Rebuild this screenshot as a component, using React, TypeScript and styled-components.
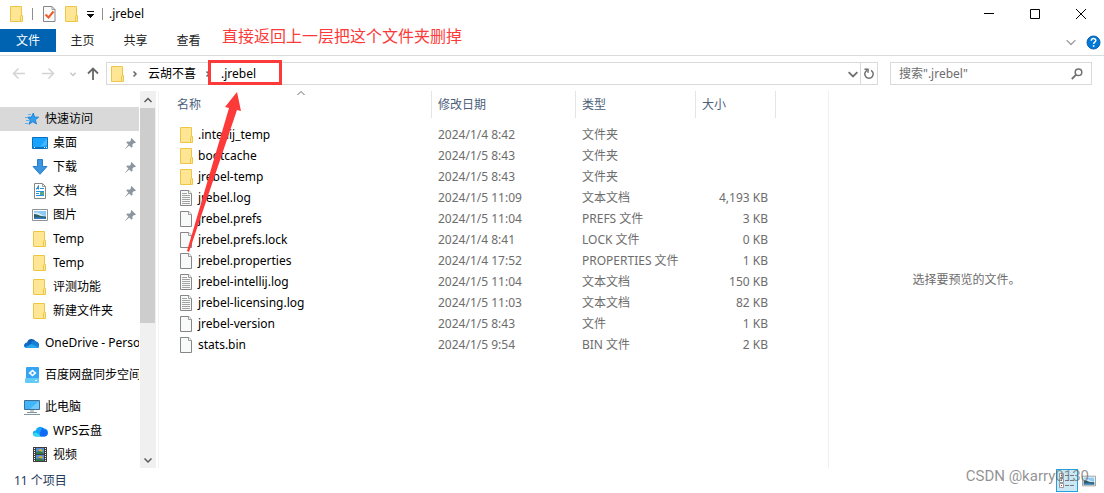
import React from "react";
import styled, { createGlobalStyle } from "styled-components";

const GlobalStyle = createGlobalStyle`
  * { box-sizing: border-box; }
  html, body { margin: 0; padding: 0; background: #fff; }
  body, button, input, table {
    font-family: "Noto Sans", "Noto Sans CJK SC", sans-serif;
    font-size: 12px;
    line-height: 16px;
    color: #000;
  }
  button { border: 0; padding: 0; margin: 0; background: none; }
  svg { display: block; flex: none; }
`;

/* ---------- window frame ---------- */

const Window = styled.div`
  position: relative;
  display: flex;
  flex-direction: column;
  height: 100vh;
  min-height: 320px;
  overflow: hidden;
`;

const TitleBar = styled.header`
  display: flex;
  align-items: center;
  height: 28px;
  padding-left: 10px;
`;

const QuickTools = styled.div`
  display: flex;
  align-items: center;
  gap: 8px;
`;

const ToolButton = styled.button`
  display: flex;
  align-items: center;
  justify-content: center;
`;

const Separator = styled.span`
  width: 1px;
  height: 12px;
  background: #8e8e8e;
`;

const WindowTitle = styled.h1`
  flex: 1;
  margin: 0 0 0 6px;
  font-size: 12px;
  line-height: 16px;
  font-weight: 400;
`;

const CaptionButton = styled.button`
  display: flex;
  align-items: center;
  justify-content: center;
  width: 46px;
  height: 28px;
`;

const Ribbon = styled.nav`
  display: flex;
  align-items: center;
  height: 28px;
  padding: 1px 3px 0 0;
  border-bottom: 1px solid #dadbdc;
`;

const Tab = styled.button<{ $primary?: boolean }>`
  align-self: flex-start;
  width: ${(p) => (p.$primary ? 56 : 53)}px;
  height: 23px;
  padding-top: 1px;
  color: ${(p) => (p.$primary ? "#fff" : "#222")};
  background: ${(p) => (p.$primary ? "#0063b1" : "transparent")};
`;

const Spacer = styled.span`
  flex: 1;
`;

const RibbonTools = styled.div`
  display: flex;
  align-items: center;
  gap: 10px;
`;

/* ---------- address row ---------- */

const AddressRow = styled.div`
  display: flex;
  align-items: center;
  height: 35px;
  padding: 0 12px;
`;

const NavButtons = styled.div`
  display: flex;
  align-items: center;
  width: 94px;
`;

const NavButton = styled.button<{ $width: number }>`
  display: flex;
  align-items: center;
  width: ${(p) => p.$width}px;
`;

const AddressBox = styled.div`
  display: flex;
  align-items: center;
  flex: 1;
  height: 23px;
  border: 1px solid #d9d9d9;
  padding-left: 3px;
`;

const CrumbMark = styled.span`
  margin-left: 5px;
`;

const Crumb = styled.button`
  margin: 0 8px 0 9px;
`;

const Refresh = styled.button`
  display: flex;
  align-items: center;
  justify-content: center;
  width: 17px;
  height: 21px;
  margin-left: 2px;
  border-left: 1px solid #d9d9d9;
`;

const SearchBox = styled.label`
  display: flex;
  align-items: center;
  width: 202px;
  height: 23px;
  margin-left: 12px;
  padding: 0 8px;
  border: 1px solid #d9d9d9;
`;

const SearchInput = styled.input`
  flex: 1;
  min-width: 0;
  border: 0;
  padding: 0;
  outline: 0;
  background: none;
  &::placeholder { color: #6d6d6d; opacity: 1; }
`;

/* ---------- body ---------- */

const Body = styled.div`
  display: flex;
  flex: 1;
  min-height: 0;
`;

const Tree = styled.nav`
  width: 140px;
  padding: 16px 1px 0 0;
  overflow: hidden;
`;

const TreeGroup = styled.ul`
  list-style: none;
  margin: 0 0 8px;
  padding: 0;
`;

const TreeItem = styled.li<{ $child?: boolean; $selected?: boolean }>`
  display: flex;
  align-items: center;
  height: 24px;
  padding-left: ${(p) => (p.$child ? 32 : 24)}px;
  background: ${(p) => (p.$selected ? "#d9d9d9" : "transparent")};
`;

const TreeLink = styled.a`
  flex: 1;
  min-width: 0;
  margin-left: 5px;
  overflow: hidden;
  white-space: nowrap;
  color: #000;
  text-decoration: none;
`;

const PinMark = styled.span`
  margin-right: 3px;
`;

const IconSlot = styled.span`
  display: flex;
  justify-content: center;
  flex: none;
  width: 16px;
`;

const ScrollTrack = styled.div`
  display: flex;
  flex-direction: column;
  justify-content: space-between;
  width: 16px;
  background: #f0f0f0;
`;

const ScrollButton = styled.button`
  display: flex;
  align-items: center;
  justify-content: center;
  height: 17px;
`;

const ScrollThumb = styled.div`
  flex: 0 0 57%;
  margin-bottom: auto;
  margin-right: 1px;
  background: #cdcdcd;
`;

const ListPane = styled.main`
  flex: 1;
  min-width: 0;
  margin-left: 2px;
  padding-left: 11px;
  border-left: 1px solid #f2f2f2;
`;

const FileTable = styled.table`
  table-layout: fixed;
  width: 606px;
  border-collapse: separate;
  border-spacing: 0;
`;

const HeadCell = styled.th`
  position: relative;
  height: 27px;
  padding: 0 6px;
  border-right: 1px solid #e5e5e5;
  text-align: left;
  font-weight: 400;
  color: #4c607a;
  &:first-child { padding-left: 7px; }
`;

const SortMark = styled.span`
  position: absolute;
  top: -2px;
  left: 50%;
  margin-left: -4px;
`;

const Rows = styled.tbody`
  &::before {
    content: "";
    display: block;
    height: 6px;
  }
`;

const Cell = styled.td<{ $right?: boolean }>`
  height: 21px;
  padding: 0 8px 0 6px;
  color: #6d6d6d;
  white-space: nowrap;
  text-align: ${(p) => (p.$right ? "right" : "left")};
`;

const NameCell = styled(Cell)`
  padding-left: 10px;
  color: #000;
`;

const FileName = styled.span`
  display: flex;
  align-items: center;
  gap: 4px;
`;

const Preview = styled.aside`
  display: flex;
  align-items: center;
  justify-content: center;
  width: 25%;
  border-left: 1px solid #f0f0f0;
  color: #6d6d6d;
`;

const StatusBar = styled.footer`
  display: flex;
  align-items: center;
  height: 25px;
  padding: 0 4px 0 14px;
  color: #1e395b;
`;

const ViewButton = styled.button<{ $active?: boolean }>`
  display: flex;
  align-items: center;
  justify-content: center;
  width: 22px;
  height: 23px;
  border: ${(p) => (p.$active ? "1px solid #26a0da" : "0")};
  background: ${(p) => (p.$active ? "#cbe8f6" : "transparent")};
`;

/* ---------- notes drawn over the window ---------- */

const Note = styled.p`
  position: absolute;
  top: 24px;
  left: 222px;
  margin: 0;
  font-size: 16px;
  line-height: 24px;
  color: #fc3a3a;
`;

const Marks = styled.svg`
  position: absolute;
  top: 60px;
  left: 180px;
  pointer-events: none;
`;

const Watermark = styled.span`
  position: absolute;
  right: 15px;
  bottom: 7px;
  font-family: Roboto, sans-serif;
  font-size: 15px;
  line-height: 20px;
  color: rgba(110, 110, 110, 0.75);
  pointer-events: none;
`;

/* ---------- icons ---------- */

const FolderIcon = () => (
  <svg width="14" height="16" viewBox="0 0 14 16">
    <path d="M.5.5h11v15H.5z" fill="#ffe694" stroke="#ecc648" />
    <path d="M10.500 15.500v-5l.5-1h1.500v6z" fill="#ffe694" stroke="#ecc648" />
  </svg>
);

const FileIcon = ({ lines }: { lines?: boolean }) => (
  <svg width="14" height="16" viewBox="0 0 14 16">
    <path d="M.5.5h8.500l2.500 3v12H.5z" fill="#f8f9f9" stroke="#868686" />
    <path d="M8.500.5v3h3" fill="#fff" stroke="#9a9a9a" />
    {lines && <path d="M2 3.500h5M2 5.500h8M2 7.500h8M2 9.500h8M2 11.500h8M2 13.500h8" stroke="#a2a2a2" />}
  </svg>
);

const CheckedFileIcon = () => (
  <svg width="14" height="16" viewBox="-1 0 14 16">
    <path d="M.5.5h8.500l3 3v12H.5z" fill="#fafafa" stroke="#868686" />
    <path d="M9 .5v3h3" fill="none" stroke="#9a9a9a" />
    <path d="M2.500 8.500l3 3 5-6" fill="none" stroke="#ef5a28" strokeWidth="2" />
  </svg>
);

const QuickMenuIcon = () => (
  <svg width="7" height="7" viewBox="0 0 7 7" shapeRendering="crispEdges">
    <path d="M0 0h7v1H0zM0 3h7v1H6v1H5v1H4v1H3V6H2V5H1V4H0z" fill="#111" />
  </svg>
);

type ChevronProps = { dir: "up" | "down" | "right"; size?: number; color?: string; weight?: number };

const Chevron = ({ dir, size = 8, color = "#666", weight = 1 }: ChevronProps) => {
  const d = { up: "M0.500 6l3.500-3.500L7.500 6", down: "M0.500 2.500L4 6l3.500-3.500", right: "M2.500 1.500L5 4 2.500 6.500" }[dir];
  return (
    <svg width={size} height={size} viewBox="0 0 8 8">
      <path d={d} fill="none" stroke={color} strokeWidth={weight} />
    </svg>
  );
};

const ArrowIcon = ({ dir, color }: { dir: "left" | "right" | "up"; color: string }) => {
  const d = {
    left: "M13 6.500H1.500M6.500 1.500l-5 5 5 5",
    right: "M0 6.500h11.500M6.500 1.500l5 5-5 5",
    up: "M6 13V1.500M1 6.500l5-5 5 5",
  }[dir];
  return (
    <svg width="13" height="13" viewBox="0 0 13 13">
      <path d={d} fill="none" stroke={color} strokeWidth={dir === "up" ? 1.8 : 1.5} />
    </svg>
  );
};

const RefreshIcon = () => (
  <svg width="12" height="12" viewBox="0 0 12 12">
    <path d="M8 2.300A4.200 4.200 0 1 1 4 2.300" fill="none" stroke="#707070" strokeWidth="1.500" />
    <path d="M1.500 1.300H5v3.500" fill="none" stroke="#707070" strokeWidth="1.500" />
  </svg>
);

const SearchIcon = () => (
  <svg width="12" height="12" viewBox="0 0 12 12">
    <circle cx="7.500" cy="4.300" r="3.300" fill="none" stroke="#707070" strokeWidth="1.500" />
    <path d="M5.200 6.600L.8 11" stroke="#707070" strokeWidth="1.800" />
  </svg>
);

const HelpIcon = () => (
  <svg width="15" height="15" viewBox="0 0 15 15">
    <circle cx="7.500" cy="7.500" r="6.500" fill="#0078d7" stroke="#0a5ca8" />
    <path d="M5.300 5.800c0-3 4.500-2.800 4.500-.3 0 1.600-2.200 1.600-2.200 3.400" fill="none" stroke="#fff" strokeWidth="1.500" />
    <path d="M6.800 10.200h1.600v1.600H6.800z" fill="#fff" />
  </svg>
);

const StarIcon = () => (
  <svg width="16" height="16" viewBox="0 0 16 16">
    <path d="M9.300 2l1.200 4 4.200.2-3.400 2.600 1.200 4.200-3.700-2.200L5 13.300l1.300-4.400L3.200 6.300l4.200-.2z" fill="#2f9df0" stroke="#1979ca" strokeWidth=".8" />
    <path d="M4 3.500h3M1 6.500h3M2 9.500h3M1 12.500h3" stroke="#55b4f6" />
  </svg>
);

const DesktopIcon = () => (
  <svg width="16" height="16" viewBox="0 0 16 16">
    <path d="M.5 2.500h15v11H.5z" fill="#18a3ff" stroke="#0870bd" />
    <path d="M15 3v7L8 12z" fill="#45b6ff" />
    <path d="M1 12h14v1H1z" fill="#0870bd" />
    <path d="M2 12h1v1H2zM12 12h1v1h-1zM14 12h1v1h-1z" fill="#fff" />
  </svg>
);

const DownloadIcon = () => (
  <svg width="16" height="16" viewBox="0 0 16 16">
    <path d="M5.500.5h5v7h4.500L8 15.300 1 7.500h4.500z" fill="#3b94e0" stroke="#2b7fc9" />
  </svg>
);

const DocumentIcon = () => (
  <svg width="16" height="16" viewBox="0 0 16 16">
    <path d="M2.500.5h8l3 3v12h-11z" fill="#fff" stroke="#868686" />
    <path d="M10.500.5v3h3" fill="none" stroke="#9a9a9a" />
    <path d="M6.500 2.500l-2 4M6.500 2.500v4M4 5.500h3M8 5.500h4M4 8.500h8M4 10.500h3M4 12.500h8" stroke="#2492dc" fill="none" />
    <path d="M8 9h4v3H8z" fill="#5aa58a" />
  </svg>
);

const PictureIcon = ({ size = 16 }: { size?: number }) => (
  <svg width={size} height={size} viewBox="0 0 16 16">
    <path d="M.5 2.500h15v11H.5z" fill="#fff" stroke="#929292" />
    <path d="M2 4h12v8H2z" fill="#8fcaf5" />
    <path d="M2 6c3-1 6 0 8 2l4 1v3H2z" fill="#d5ecf7" />
    <path d="M2 7l3 .5L9 9l5 .5V12H2z" fill="#2b5d62" />
    <path d="M2 10.500l5-.5 7 1V12H2z" fill="#327bb8" />
  </svg>
);

const CloudIcon = () => (
  <svg width="16" height="16" viewBox="0 0 16 16">
    <path d="M3.500 13a3.500 3.500 0 0 1-.3-5.500A4.600 4.600 0 0 1 11.800 6.500 3.400 3.400 0 0 1 13 13z" fill="#0f5fb5" />
    <path d="M7 7.300a4 4 0 0 1 6-.1A3.100 3.100 0 0 1 13 13H9z" fill="#1580d6" />
    <path d="M0 10.500c0-2 2-3.500 4-3l4.500 2 6.500 2.500c-.3.700-1 1-2 1H3C1 13 0 12 0 10.500z" fill="#0c6ccb" />
    <path d="M1.200 12l6.500-3 6.800 3.200c-.4.600-1 .8-1.500.8H3C2.200 13 1.600 12.600 1.200 12z" fill="#28a8ea" />
  </svg>
);

const NetDiskIcon = () => (
  <svg width="16" height="16" viewBox="0 0 16 16">
    <rect x="2" y="0" width="13" height="12" rx="1" fill="#36a4f5" />
    <rect x="1" y="11" width="14" height="5" rx="1" fill="#63cbf8" />
    <path d="M8.500 2.500l4 3.500-4 3.500L4.500 6z" fill="#fff" />
    <path d="M8.500 4.500L10 6 8.500 7.500 7 6z" fill="#36a4f5" />
    <path d="M11 13h2v1h-2z" fill="#fff" />
  </svg>
);

const ComputerIcon = () => (
  <svg width="16" height="16" viewBox="0 0 16 16">
    <path d="M.5 1.500h15v9H.5z" fill="#42b4f8" stroke="#3e6f96" />
    <path d="M15 2v8L6 10z" fill="#71cafb" />
    <path d="M6 11h4v2H6z" fill="#c2cbd2" />
    <path d="M3 13.500h10M0 15.500h16" stroke="#8295a3" />
  </svg>
);

const WpsIcon = () => (
  <svg width="16" height="16" viewBox="0 0 16 16">
    <path d="M4 13.500a3 3 0 0 1-.2-6A4.300 4.300 0 0 1 11.500 5.500a4 4 0 0 1 .8 8z" fill="#17a7fa" />
    <path d="M10.300 4.500c1.500.5 2 1.500 2 2.200a3.400 3.400 0 0 1 0 6.800H8.500c-2-3.500 1-6 1.800-9z" fill="#1268f4" />
    <path d="M1 10.500c2-1.500 5.500-1 7.500 3H4c-1.500 0-2.700-1-3-3z" fill="#30d9ef" />
  </svg>
);

const VideoIcon = () => (
  <svg width="16" height="16" viewBox="0 0 16 16">
    <path d="M1 0h14v15H1z" fill="#3d3d3d" />
    <path d="M4 1h8v6H4zM4 8h8v6H4z" fill="#568dd4" />
    <path d="M6 3l3-1 2 2-2 1zM6 10l3-1 2 1-2 2z" fill="#dcb52d" />
    <path d="M4 5l4-1 4 2v1H4zM4 12l4-1 4 2v1H4z" fill="#347750" />
    <path d="M2.500 1v14M13.500 1v14" stroke="#fff" strokeDasharray="1 1" />
  </svg>
);

const PinIcon = () => (
  <svg width="11" height="11" viewBox="0 0 11 11">
    <path d="M6.500 0L11 4.500l-1.300.7-.7-.2-1.700 1.800.3 2-1.100 1L4.300 7.500.5 10.700.2 10.400 3.500 6.600 1.200 4.400l1-1 2.200.3L6 2.200l-.2-1z" fill="#8b96a0" />
  </svg>
);

const DetailsViewIcon = () => (
  <svg width="16" height="16" viewBox="0 0 16 16">
    <path d="M.5.5h4v4h-4zM.5 5.500h4v4h-4zM.5 10.500h4v4h-4z" fill="#fff" stroke="#999" />
    <path d="M2 2h1v1H2z" fill="#555" />
    <path d="M2 7h1v1H2z" fill="#27a" />
    <path d="M2 12h1v1H2z" fill="#d22" />
    <path d="M6 2.500h4M11 2.500h4M6 7.500h4M11 7.500h4M6 12.500h4M11 12.500h4" stroke="#777" />
  </svg>
);

const MinimizeIcon = () => (
  <svg width="10" height="10" viewBox="0 0 10 10"><path d="M0 4.500h10" stroke="#000" /></svg>
);
const MaximizeIcon = () => (
  <svg width="10" height="10" viewBox="0 0 10 10"><path d="M.5.5h9v9h-9z" fill="none" stroke="#000" /></svg>
);
const CloseIcon = () => (
  <svg width="10" height="10" viewBox="0 0 10 10"><path d="M0 0l10 10M10 0L0 10" stroke="#000" /></svg>
);

/* ---------- data ---------- */

type TreeEntry = { label: string; icon: React.FC; child?: boolean; pinned?: boolean; selected?: boolean };

const tree: TreeEntry[][] = [
  [
    { label: "快速访问", icon: StarIcon, selected: true },
    { label: "桌面", icon: DesktopIcon, child: true, pinned: true },
    { label: "下载", icon: DownloadIcon, child: true, pinned: true },
    { label: "文档", icon: DocumentIcon, child: true, pinned: true },
    { label: "图片", icon: PictureIcon, child: true, pinned: true },
    { label: "Temp", icon: FolderIcon, child: true },
    { label: "Temp", icon: FolderIcon, child: true },
    { label: "评测功能", icon: FolderIcon, child: true },
    { label: "新建文件夹", icon: FolderIcon, child: true },
  ],
  [{ label: "OneDrive - Personal", icon: CloudIcon }],
  [{ label: "百度网盘同步空间", icon: NetDiskIcon }],
  [
    { label: "此电脑", icon: ComputerIcon },
    { label: "WPS云盘", icon: WpsIcon, child: true },
    { label: "视频", icon: VideoIcon, child: true },
  ],
];

type FileEntry = { name: string; date: string; type: string; size?: string; kind: "folder" | "text" | "file" };

const files: FileEntry[] = [
  { name: ".intellij_temp", date: "2024/1/4 8:42", type: "文件夹", kind: "folder" },
  { name: "bootcache", date: "2024/1/5 8:43", type: "文件夹", kind: "folder" },
  { name: "jrebel-temp", date: "2024/1/5 8:43", type: "文件夹", kind: "folder" },
  { name: "jrebel.log", date: "2024/1/5 11:09", type: "文本文档", size: "4,193 KB", kind: "text" },
  { name: "jrebel.prefs", date: "2024/1/5 11:04", type: "PREFS 文件", size: "3 KB", kind: "file" },
  { name: "jrebel.prefs.lock", date: "2024/1/4 8:41", type: "LOCK 文件", size: "0 KB", kind: "file" },
  { name: "jrebel.properties", date: "2024/1/4 17:52", type: "PROPERTIES 文件", size: "1 KB", kind: "file" },
  { name: "jrebel-intellij.log", date: "2024/1/5 11:04", type: "文本文档", size: "150 KB", kind: "text" },
  { name: "jrebel-licensing.log", date: "2024/1/5 11:03", type: "文本文档", size: "82 KB", kind: "text" },
  { name: "jrebel-version", date: "2024/1/5 8:43", type: "文件", size: "1 KB", kind: "file" },
  { name: "stats.bin", date: "2024/1/5 9:54", type: "BIN 文件", size: "2 KB", kind: "file" },
];

export default function App() {
  return (
    <Window>
      <GlobalStyle />
      <TitleBar>
        <QuickTools>
          <FolderIcon />
          <Separator />
          <ToolButton aria-label="属性"><IconSlot><CheckedFileIcon /></IconSlot></ToolButton>
          <ToolButton aria-label="新建文件夹"><FolderIcon /></ToolButton>
          <ToolButton aria-label="自定义快速访问工具栏"><QuickMenuIcon /></ToolButton>
          <Separator />
        </QuickTools>
        <WindowTitle>.jrebel</WindowTitle>
        <CaptionButton aria-label="最小化"><MinimizeIcon /></CaptionButton>
        <CaptionButton aria-label="最大化"><MaximizeIcon /></CaptionButton>
        <CaptionButton aria-label="关闭"><CloseIcon /></CaptionButton>
      </TitleBar>

      <Ribbon>
        <Tab $primary>文件</Tab>
        <Tab>主页</Tab>
        <Tab>共享</Tab>
        <Tab>查看</Tab>
        <Spacer />
        <RibbonTools>
          <ToolButton aria-label="展开功能区"><Chevron dir="down" size={10} color="#999" /></ToolButton>
          <ToolButton aria-label="帮助"><HelpIcon /></ToolButton>
        </RibbonTools>
      </Ribbon>

      <AddressRow>
        <NavButtons>
          <NavButton $width={30} aria-label="后退"><ArrowIcon dir="left" color="#d3d3d3" /></NavButton>
          <NavButton $width={28} aria-label="前进"><ArrowIcon dir="right" color="#d3d3d3" /></NavButton>
          <NavButton $width={17} aria-label="最近浏览的位置"><Chevron dir="down" size={6} color="#c8c8c8" weight={2} /></NavButton>
          <NavButton $width={19} aria-label="上移"><ArrowIcon dir="up" color="#686868" /></NavButton>
        </NavButtons>
        <AddressBox>
          <IconSlot><FolderIcon /></IconSlot>
          <CrumbMark><Chevron dir="right" weight={1.5} /></CrumbMark>
          <Crumb>云胡不喜</Crumb>
          <Chevron dir="right" weight={1.5} />
          <Crumb>.jrebel</Crumb>
          <Spacer />
          <ToolButton aria-label="以前的位置"><Chevron dir="down" size={10} color="#707070" weight={1.5} /></ToolButton>
          <Refresh aria-label="刷新"><RefreshIcon /></Refresh>
        </AddressBox>
        <SearchBox>
          <SearchInput type="text" aria-label="搜索" placeholder={'搜索".jrebel"'} />
          <SearchIcon />
        </SearchBox>
      </AddressRow>

      <Body>
        <Tree>
          {tree.map((group, g) => (
            <TreeGroup key={g}>
              {group.map(({ label, icon: Icon, child, pinned, selected }, i) => (
                <TreeItem key={i} $child={child} $selected={selected}>
                  <IconSlot><Icon /></IconSlot>
                  <TreeLink href="#">{label}</TreeLink>
                  {pinned && <PinMark><PinIcon /></PinMark>}
                </TreeItem>
              ))}
            </TreeGroup>
          ))}
        </Tree>
        <ScrollTrack>
          <ScrollButton aria-label="向上滚动"><Chevron dir="up" color="#585858" weight={1.5} /></ScrollButton>
          <ScrollThumb />
          <ScrollButton aria-label="向下滚动"><Chevron dir="down" color="#585858" weight={1.5} /></ScrollButton>
        </ScrollTrack>

        <ListPane>
          <FileTable>
            <colgroup>
              <col width="262" />
              <col width="144" />
              <col width="120" />
              <col width="80" />
            </colgroup>
            <thead>
              <tr>
                <HeadCell>名称<SortMark><Chevron dir="up" /></SortMark></HeadCell>
                <HeadCell>修改日期</HeadCell>
                <HeadCell>类型</HeadCell>
                <HeadCell>大小</HeadCell>
              </tr>
            </thead>
            <Rows>
              {files.map((f) => (
                <tr key={f.name}>
                  <NameCell>
                    <FileName>
                      {f.kind === "folder" ? <FolderIcon /> : <FileIcon lines={f.kind === "text"} />}
                      {f.name}
                    </FileName>
                  </NameCell>
                  <Cell>{f.date}</Cell>
                  <Cell>{f.type}</Cell>
                  <Cell $right>{f.size}</Cell>
                </tr>
              ))}
            </Rows>
          </FileTable>
        </ListPane>

        <Preview>选择要预览的文件。</Preview>
      </Body>

      <StatusBar>
        11 个项目
        <Spacer />
        <ViewButton $active aria-label="详细信息"><DetailsViewIcon /></ViewButton>
        <ViewButton aria-label="大图标"><PictureIcon size={14} /></ViewButton>
      </StatusBar>

      <Note>直接返回上一层把这个文件夹删掉</Note>
      <Marks width="110" height="200" viewBox="0 0 110 200">
        <rect x="29.500" y="1.500" width="71" height="22" fill="none" stroke="#fc3a3a" strokeWidth="3" />
        <path d="M57 32L45 47l4 1L7 191l2 1L57 50l4 1z" fill="#fc3a3a" />
      </Marks>
      <Watermark>CSDN @karry0130</Watermark>
    </Window>
  );
}
